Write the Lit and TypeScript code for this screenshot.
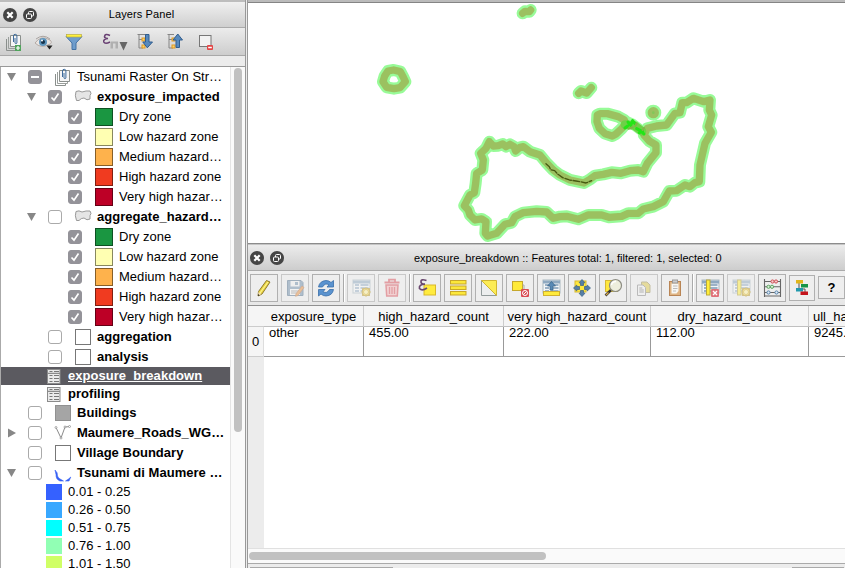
import { LitElement, html, svg, css, nothing, TemplateResult } from "lit";
import { customElement, property } from "lit/decorators.js";
import { classMap } from "lit/directives/class-map.js";
import { styleMap } from "lit/directives/style-map.js";

const doc = svg`<path d="M3.500 8V19.500H13.500V17" fill="none" stroke="#8a8f8c"/><path d="M5.500 6V17.500H15.500V15" fill="none" stroke="#9a9f9c"/><path d="M7.500 4.500H17.500V15.500H7.500Z" fill="#f6f6f6" stroke="#8a8f8c"/><path d="M10.500 11V5a1.700 1.700 0 0 1 3.400 0V12a1 1 0 0 1-1.900 0V7" fill="none" stroke="#3f6c9c"/>`;
const table = svg`<rect x="3" y="3" width="17" height="13" fill="#f4f6f7" stroke="#a9b7c0"/><path d="M3 5h17" stroke="#8fa9c0" stroke-width="3"/><path d="M5 8h4M10.500 8h8M5 11h4M10.500 11h8M5 14h4M10.500 14h8" stroke="#7d9cb8" stroke-width="1.500"/>`;
const spark = svg`<rect x="12.500" y="11.500" width="7" height="7" fill="#eecb38" stroke="#b9972a"/><path d="M16 10v10M11 15h10M12.500 11.500l7 7M19.500 11.500l-7 7" stroke="#c9a830"/><circle cx="16" cy="15" r="2" fill="#fff2a0"/>`;

const icons: Record<string, TemplateResult> = {
  addGroup: svg`${doc}<rect x="12" y="14" width="6" height="6" fill="#4fa45b"/><path d="M15 15v4M13 17h4" stroke="#fff" stroke-width="1.200"/>`,
  eye: svg`<path d="M2 12Q8 3.500 17 9Q20 12 16 13.500Q8 18 2 12Z" fill="#e9e5e2" stroke="#b4aaa5"/><path d="M3 8Q10 2.500 17 8" stroke="#aaa3a0" fill="none"/><circle cx="10" cy="11" r="4" fill="#5e95bd"/><circle cx="10" cy="11" r="2.100" fill="#17334b"/><circle cx="9" cy="9.500" r="1" fill="#fff"/><path d="M13.500 14.500h6l-3 4z" fill="#222"/>`,
  filter: svg`<path d="M3 5.500L9 12V18.500H13V12L19 5.500Z" fill="#6f9dcc" stroke="#4473a5"/><rect x="3.500" y="3.500" width="15" height="2.500" fill="#fff13b" stroke="#b9ad43" stroke-width=".7"/>`,
  epsFilter: svg`<path d="M8 4.500Q3 2 2.500 5.500Q2.500 7.500 6 7.500Q1 8 1.800 11Q3 13.500 8 11" stroke="#694073" stroke-width="1.600" fill="none"/><path d="M8.500 10.500H16V17.500H13.500V12.500H11V17.500H8.500Z" fill="#b0b0b0"/><path d="M17.500 11h8l-4 8.500z" fill="#666"/>`,
  expand: svg`<path d="M1.500 3.500H10M3 3V17H7M3 8.500H7" stroke="#858585" fill="none"/><rect x="6" y="7" width="3" height="3" fill="#f7d26a" stroke="#e09925"/><rect x="6" y="14" width="3" height="3" fill="#f7d26a" stroke="#e09925"/><path d="M9.500 3.500H13V11H16.500L11.300 16.800L6.800 11H9.500Z" fill="#5689bd" stroke="#315d8e"/>`,
  collapse: svg`<path d="M1.500 3.500H8M3 3V17H7M3 8.500H7" stroke="#858585" fill="none"/><rect x="6" y="7" width="3" height="3" fill="#f7d26a" stroke="#e09925"/><rect x="6" y="14" width="3" height="3" fill="#f7d26a" stroke="#e09925"/><path d="M10 16.500H13.500V9H16.500L11.800 3L7 9H10Z" fill="#5689bd" stroke="#315d8e"/>`,
  remove: svg`<rect x="3.500" y="4.500" width="11.500" height="11" fill="#f2f2f2" stroke="#777"/><rect x="11" y="14" width="6" height="5" rx="1" fill="#e24545"/><path d="M12.200 16.500h3.600" stroke="#fff" stroke-width="1.500"/>`,
  pencil: svg`<path d="M13.500 3.500L17 5L9 17L5 19L5.500 14.500Z" fill="#e9d341" stroke="#8e7930"/><path d="M15 5L7 16" stroke="#fff592" stroke-width="1.200"/><path d="M5.500 15l3 2-3.300 1.500z" fill="#f2dfb9"/><path d="M5 17v2l1.500-.7z" fill="#222"/>`,
  save: svg`<path d="M3.500 3.500H17L19 5.500V18.500H3.500Z" fill="#718fac" stroke="#54728e"/><rect x="6.500" y="4" width="9" height="5.500" fill="#eee"/><path d="M11 5h3v3h-3z" fill="#718fac"/><rect x="6" y="12" width="10" height="6" fill="#f6f6f6"/><path d="M7 14h8M7 16h6" stroke="#888"/><path d="M18 9l2 1.500-6 8-2.500.8.500-2.500z" fill="#e89445" stroke="#b66732" stroke-width=".7"/>`,
  refresh: svg`<path d="M3.500 10Q4.500 4 11 3.500Q14 3.500 16 5.500L18.500 3.500V10H12L14 7.800Q10 5.500 7.500 10Z" fill="#5b93cf" stroke="#386eaa" stroke-width=".8"/><path d="M18.500 12.500Q17.500 18.500 11 19Q8 19 6 17L3.500 19V12.500H10L8 14.700Q12 17 14.500 12.500Z" fill="#5b93cf" stroke="#386eaa" stroke-width=".8"/>`,
  addRow: svg`${table}${spark}`,
  trash: svg`<path d="M3.500 5.500H18.500M8 5V2.700h6V5" stroke="#d9515b" stroke-width="1.800" fill="none"/><path d="M5 8H17L16.300 19H5.700Z" fill="#f5b5b8" stroke="#d9515b" stroke-width="1.500"/><path d="M8.500 10v7M11 10v7M13.500 10v7" stroke="#d9515b" stroke-width="1.300"/>`,
  exprSelect: svg`<rect x="8" y="8" width="11.500" height="10" fill="#ffeb3e" stroke="#d9b82a"/><path d="M10.500 3.500Q4.500 1.500 5 5Q5 7.200 9 7.200Q2.500 7.500 3.500 11.500Q6 14.500 11 11" stroke="#6a496f" stroke-width="1.700" fill="none"/>`,
  selectAll: svg`${[3.500, 9, 14.500].map(y => svg`<rect x="3.500" y=${y} width="15.500" height="3.500" fill="#fce83b" stroke="#c9a82b"/>`)}`,
  invert: svg`<path d="M3.500 3.500V18.500H18.500Z" fill="#eceeee" stroke="#929b9b"/><path d="M3.500 3.500H18.500V18.500Z" fill="#fcec55" stroke="#d1b731"/>`,
  deselect: svg`<rect x="3.500" y="4.500" width="10" height="9" fill="#ffea38" stroke="#c5a82c"/><path d="M13.500 8H15V12" stroke="#aaa" fill="none"/><rect x="12" y="12" width="8" height="8" rx="1" fill="#d94c53"/><circle cx="16" cy="16" r="2.500" fill="none" stroke="#fff"/><path d="M14.300 17.700l3.400-3.400" stroke="#fff"/>`,
  moveTop: svg`${table}<rect x="3.500" y="14.500" width="16" height="4" fill="#ffeb3c" stroke="#d1b22f"/><path d="M10 13V9H7.500L11.500 4.500L15.500 9H13V13Z" fill="#5889b5" stroke="#366188" stroke-width=".7"/>`,
  pan: svg`<rect x="4" y="4" width="11" height="11" fill="#ffe93d" stroke="#d6b832"/>${[0, 90, 180, 270].map(a => svg`<path d="M11 2.500L14 5.800H12.500V8.500H9.500V5.800H8Z" transform="rotate(${a} 11 11)" fill="#557fa8" stroke="#3b6186" stroke-width=".7"/>`)}`,
  zoomSel: svg`<rect x="3.500" y="3.500" width="12" height="11" fill="#ffe83e" stroke="#d7b936"/><path d="M9 13L3.500 18.500" stroke="#343434" stroke-width="2.500"/><path d="M6.500 15.500L4 18" stroke="#d9a94a" stroke-width="1.200"/><circle cx="13.500" cy="8.500" r="6" fill="#eeeedd" stroke="#8c8c83" stroke-width="1.200"/><path d="M9.500 8Q10 4.500 14 4.500" stroke="#fff" fill="none" stroke-width="1.500"/>`,
  copy: svg`<path d="M8.500 5H14L17 8V15.500H8.500Z" fill="#ddc94c" stroke="#9b9058"/><path d="M4.500 8H10L12.500 10.500V18.500H4.500Z" fill="#f0f0f0" stroke="#888"/><path d="M6.300 11h3M6.300 13h4.500M6.300 15h4.500" stroke="#777"/>`,
  paste: svg`<rect x="5.500" y="4.500" width="11" height="14" fill="#dfb483" stroke="#b98555"/><path d="M7.500 6.500H14.500V14L12.500 16.500H7.500Z" fill="#f7f7f4"/><rect x="8.500" y="3" width="5" height="3" fill="#ccc" stroke="#999"/><path d="M9 9h4.500M9 11.500h4.500M9 14h3" stroke="#bbb"/>`,
  delCol: svg`${table}<rect x="7.500" y="3" width="3.500" height="15" fill="#ffed3b" stroke="#b9a83a"/><rect x="12" y="12" width="8" height="8" rx="1" fill="#e0737a"/><path d="M14 14l4 4M18 14l-4 4" stroke="#fff" stroke-width="1.300"/>`,
  newCol: svg`${table}<rect x="7.500" y="3" width="3.500" height="15" fill="#ffed3b" stroke="#b9a83a"/>${spark}`,
  abacus: svg`<path d="M3.500 2V20M19.500 2V20M3 4.500H20M3 9.800H20M3 15.500H20M3 19H20" stroke="#666" stroke-width="1.100"/>${[11.500, 15].map(x => svg`<circle cx=${x} cy="4.500" r="1.600" stroke="#cf4e55" fill="#f6c7c8"/>`)}${[7.500, 11].map(x => svg`<circle cx=${x} cy="9.800" r="1.600" stroke="#5da361" fill="#d8f0d6"/>`)}${[7.500, 15.500].map(x => svg`<circle cx=${x} cy="15.500" r="1.600" stroke="#5481a9" fill="#dfeaf5"/>`)}`,
  blocks: svg`<path d="M8 6v6h6v6" stroke="#555" fill="none"/><rect x="5" y="3" width="7" height="3.500" fill="#dfb51c"/><rect x="10" y="7" width="7" height="3.500" fill="#159447"/><rect x="5" y="11" width="7" height="3.500" fill="#2099ad"/><rect x="9.500" y="14.500" width="7.500" height="3.500" fill="#c4141c"/>`,
  group: doc,
  poly: svg`<path d="M4 5.500Q7 4 10 6Q14 4.500 18 5Q20 7.500 18 9.500V13Q15 15 12 12Q9 12 7 14.500H4.500Q2.500 9.500 4 5.500Z" fill="#e5e5e5" stroke="#999"/>`,
  box: svg`<rect x="3.500" y="3.500" width="15" height="15" fill="#fff" stroke="#777"/>`,
  greyBox: svg`<rect x="3.500" y="3.500" width="15" height="15" fill="#a5a5a5" stroke="#919191"/>`,
  tableIcon: svg`<rect x="4.500" y="4.500" width="12.500" height="14" fill="#eaeaea" stroke="#8b8b8b"/><path d="M4.500 4.500h12.500M4.500 8.300h12.500" stroke="#8b8b8b" stroke-width="1.200"/><path d="M6.500 6.500h3M11 6.500h5M6.500 10.500h3M11 10.500h5M6.500 13.500h3M11 13.500h5M6.500 16.500h3M11 16.500h5" stroke="#777"/>`,
  line: svg`<path d="M4 5.500L9 16L13 5L18 4.500" fill="none" stroke="#8a8a8a"/><g fill="#fff" stroke="#888" stroke-width=".7"><circle cx="4" cy="5.500" r="1"/><circle cx="9" cy="16" r="1"/><circle cx="13" cy="5" r="1"/><circle cx="17.500" cy="4.500" r="1"/></g>`,
  raster: svg`<path d="M3 8Q5.500 10 5.500 14Q6.500 17 9 17.500L11.500 19H8Q3.800 17.500 4 12.500Z" fill="#3560f5" stroke="#3560f5" stroke-width=".6"/><path d="M13.500 19H17L18.800 15L16.500 17Z" fill="#3560f5" stroke="#3560f5" stroke-width=".6"/>`,
};

const icon = (name: string, w = 22) => html`<svg width=${w} height="22" viewBox="0 0 ${w} 22">${icons[name]}</svg>`;

const windowButtons = html`<svg width="36" height="16" viewBox="0 0 36 16">
  <circle cx="8" cy="8" r="7" fill="#454545"/><path d="M5.300 5.300l5.400 5.400M10.700 5.300l-5.400 5.400" stroke="#fff" stroke-width="2.200"/>
  <circle cx="28" cy="8" r="7" fill="#454545"/><rect x="26.500" y="4.500" width="5" height="4.500" rx="1" fill="none" stroke="#fff"/><rect x="24.500" y="7" width="5" height="4.500" rx="1" fill="#454545" stroke="#fff"/></svg>`;

interface Row {
  label: string; depth: number; arrow?: "down" | "right"; check?: "on" | "off" | "mixed";
  icon?: string; color?: string; bold?: boolean; short?: boolean; selected?: boolean;
}

const hazards: Row[] = [
  ["Dry zone", "#1a9641"], ["Low hazard zone", "#ffffb2"], ["Medium hazard…", "#feb24c"],
  ["High hazard zone", "#f03b20"], ["Very high hazar…", "#bd0026"],
].map(([label, color]) => ({ label, color, depth: 3, check: "on" as const }));

const rows: Row[] = [
  { label: "Tsunami Raster On Str…", depth: 1, arrow: "down", check: "mixed", icon: "group" },
  { label: "exposure_impacted", depth: 2, arrow: "down", check: "on", icon: "poly", bold: true },
  ...hazards,
  { label: "aggregate_hazard…", depth: 2, arrow: "down", check: "off", icon: "poly", bold: true },
  ...hazards,
  { label: "aggregation", depth: 2, check: "off", icon: "box", bold: true },
  { label: "analysis", depth: 2, check: "off", icon: "box", bold: true },
  { label: "exposure_breakdown", depth: 2, icon: "tableIcon", bold: true, short: true, selected: true },
  { label: "profiling", depth: 2, icon: "tableIcon", bold: true, short: true },
  { label: "Buildings", depth: 1, check: "off", icon: "greyBox", bold: true },
  { label: "Maumere_Roads_WG…", depth: 1, arrow: "right", check: "off", icon: "line", bold: true },
  { label: "Village Boundary", depth: 1, check: "off", icon: "box", bold: true },
  { label: "Tsunami di Maumere …", depth: 1, arrow: "down", check: "off", icon: "raster", bold: true },
  ...[["0.01 - 0.25", "#3561ff"], ["0.26 - 0.50", "#38a8ff"], ["0.51 - 0.75", "#00ffff"], ["0.76 - 1.00", "#91ffb4"], ["1.01 - 1.50", "#d0ff66"]]
    .map(([label, color]) => ({ label, color, depth: 2, short: true })),
];

@customElement("layer-tools")
export class LayerTools extends LitElement {
  static styles = css`
    :host { display: flex; align-items: center; height: 27px; flex: none; padding-left: 3px; background: linear-gradient(#ececec, #cdcdcd); border-bottom: 1px solid #a8a8a8; }
    div { width: 30px; flex: none; display: flex; }
    .wide { width: 43px; padding-left: 9px; box-sizing: border-box; }
  `;
  render() {
    return html`${["addGroup", "eye", "filter"].map(n => html`<div>${icon(n)}</div>`)}
      <div class="wide">${icon("epsFilter", 28)}</div>
      ${["expand", "collapse", "remove"].map(n => html`<div>${icon(n)}</div>`)}`;
  }
}

@customElement("layers-panel")
export class LayersPanel extends LitElement {
  static styles = css`
    :host { display: flex; flex-direction: column; width: 245px; height: 568px; border-right: 3px double #999; background: #ececec; overflow: hidden; }
    .lip { height: 2px; flex: none; background: #bdbdbd; }
    .title { height: 25px; flex: none; display: flex; align-items: center; padding-left: 2px; background: linear-gradient(#f0f0f0, #cfcfcf); border-bottom: 1px solid #aaa; font-size: 11px; }
    .title span { flex: 1; text-align: center; letter-spacing: .1px; padding-bottom: 1px; }
    .gap { height: 10px; flex: none; border-bottom: 1px solid #999; }
    .body { display: flex; flex: 1; min-height: 0; border-left: 1px solid #aaa; background: #fff; }
    .tree { width: 229px; flex: none; overflow: hidden; }
    .track { flex: 1; border-left: 1px solid #e4e4e4; background: #fafafa; padding: 1px 3px; }
    .thumb { height: 364px; width: 8px; border-radius: 4px; background: #c1c1c1; }
    .row { height: 20px; display: flex; align-items: center; white-space: nowrap; font-size: 13px; }
    .text { padding-bottom: 2px; letter-spacing: .03px; }
    .short { height: 18px; }
    .bold { font-weight: bold; }
    .selected { background: #5b5a60; color: #fff; }
    .selected .text { text-decoration: underline; }
    .arrow { width: 20px; flex: none; display: flex; }
    .arrow svg { margin-left: -1px; }
    .d1 { padding-left: 5px; } .d2 { padding-left: 25px; } .d3 { padding-left: 45px; }
    .check { width: 12px; height: 12px; border: 1px solid #aaa; border-radius: 3px; background: #fff; display: flex; margin: 0 10px 0 2px; flex: none; }
    .on, .mixed { background: #949399; border-color: #949399; }
    .swatch { width: 16px; height: 16px; border: 1px solid #0007; margin: 0 6px 0 3px; flex: none; }
    .short .swatch { border: 0; margin: 0 6px 0 20px; }
    .pic { width: 22px; height: 20px; display: flex; align-items: center; margin-right: 3px; flex: none; overflow: hidden; }
    .short .pic { margin: 0 3px 0 -3px; height: 18px; }
  `;
  private row(r: Row) {
    const plainSwatch = r.short && r.color;
    return html`<div class=${classMap({ row: true, ["d" + r.depth]: true, bold: !!r.bold, short: !!r.short, selected: !!r.selected })}>
      ${plainSwatch ? nothing : html`<div class="arrow">${r.arrow ? html`<svg width="14" height="12" viewBox="0 0 14 12"><path d=${r.arrow === "down" ? "M2 2h9l-4.500 8z" : "M3 1.500v9l8-4.500z"} fill="#878787"/></svg>` : nothing}</div>`}
      ${r.check ? html`<div class="check ${r.check}"><svg width="12" height="12" viewBox="0 0 12 12">${r.check === "on" ? svg`<path d="M2.500 6.500L5 9.200L9.500 2.500" fill="none" stroke="#fff" stroke-width="1.700"/>` : r.check === "mixed" ? svg`<path d="M2 6h8" stroke="#fff" stroke-width="2"/>` : nothing}</svg></div>` : nothing}
      ${r.color ? html`<div class="swatch" style=${styleMap({ background: r.color })}></div>` : html`<div class="pic">${icon(r.icon!)}</div>`}
      <span class="text">${r.label}</span></div>`;
  }
  render() {
    return html`<div class="lip"></div><div class="title">${windowButtons}<span>Layers Panel</span></div>
      <layer-tools></layer-tools><div class="gap"></div>
      <div class="body"><div class="tree">${rows.map(r => this.row(r))}</div><div class="track"><div class="thumb"></div></div></div>`;
  }
}

const coast = "M388 425L400 438 415 437 428 432 438 440 450 433 462 440 467 453 480 442 490 440 510 455 540 465 558 487 580 510 600 525 630 540 672 549 690 538 705 527 730 523 755 517 783 520 810 512 835 510 850 515 862 490 888 458 888 435 868 423 852 405 862 385 890 378 920 375 945 340 960 338 967 308 980 308 1000 295 1032 305 1050 300 1048 330 1055 345 1045 380 1054 397 1035 430 1020 495 1018 545 1005 548 990 560 975 555 950 572 928 573 910 605 880 620 850 627 835 640 805 640 785 649 747 652 725 645 685 645 655 658 620 649 600 650 580 655 560 636 530 634 490 638 465 650 455 668 435 673 410 700 383 708 376 700 378 665 365 657 345 660 330 645 325 630 313 617 330 585 343 578 347 550 350 520 367 510 370 480 362 460 378 445Z";
const islets = "M84 213L101 210 121 215 130 232 136 245 120 263 102 266 80 262 69 245 74 228ZM488 40L495 34 508 35 512 30M656 280L663 273 680 279 694 263M712 345L720 341 742 341 775 350 793 360 798 371 785 386 768 402 757 408 735 401 718 385 711 365ZM874 338a6 6 0 1 0 12 0a6 6 0 1 0 -12 0";

@customElement("map-view")
export class MapView extends LitElement {
  static styles = css`:host { display: block; height: 240px; background: #fff; } svg { display: block; }`;
  render() {
    return html`<svg width="597" height="240" viewBox="248 3 597 240"><g transform="translate(360 0) scale(.3333)" fill="none" stroke-linejoin="round" stroke-linecap="round">
      <g stroke="#98fb98" stroke-width="36"><path d=${coast}/><path d=${islets}/></g>
      <path d="M795 362L818 372 842 390" stroke="#98fb98" stroke-width="32"/>
      <g stroke="#9bc160" stroke-width="22"><path d=${coast}/><path d=${islets}/></g>
      <path d="M795 374L822 376 846 394" stroke="#6ed048" stroke-width="26"/>
      <path d="M804 366l8 10 6-14 7 9M795 384l8-6M830 386l12 6 10 10M838 398l10-4" stroke="#22e516" stroke-width="9"/>
      <path d="M806 386l12-4M826 378l4-8M848 390l4-6" stroke="#7fb548" stroke-width="6"/>
      <circle cx="880" cy="338" r="4" fill="#82c858"/>
      <path d="M558 491l10 9 4 9 12 3 10 11 14 10 20 7 20 3 12 2 18 4 17-7" stroke="#465a10" stroke-width="4" stroke-dasharray="20 5"/>
    </g></svg>`;
  }
}

@customElement("attribute-table")
export class AttributeTable extends LitElement {
  static styles = css`
    :host { display: flex; flex-direction: column; height: 323px; overflow: hidden; background: #ececec; }
    .title { height: 25px; flex: none; display: flex; align-items: center; padding-left: 1px; background: linear-gradient(#ececec, #cdcdcd); border-bottom: 1px solid #aaa; font-size: 11px; }
    .title span { padding-left: 129px; white-space: nowrap; }
    .bar { height: 35px; flex: none; display: flex; align-items: center; gap: 3px; padding-left: 2px; border-bottom: 1px solid #909090; box-sizing: border-box; background: linear-gradient(#f0f0f0, #e7e7e7); }
    .btn { width: 28px; height: 28px; box-sizing: border-box; border: 1px solid #b0b0b0; display: flex; align-items: center; justify-content: center; flex: none; background: #eeeeee; }
    .off svg { opacity: .5; }
    .off { border-color: #c8c8c8; }
    .sep { width: 1px; height: 28px; background: #aaa; border-right: 1px solid #fff; margin-right: -1px; flex: none; }
    .small { width: 26px; height: 26px; } .help { width: 27px; height: 23px; margin-bottom: 2px; font-size: 13px; font-weight: bold; }
    .small svg { width: 24px; flex: none; }
    .grid { display: grid; grid-template-columns: 16px 100px 140px 147px 158px 140px; grid-template-rows: 21px 30px 191px; height: 242px; flex: none; font-size: 13px; background: #fff; white-space: nowrap; }
    .grid > div { box-sizing: border-box; min-width: 0; }
    .head { display: flex; align-items: center; justify-content: center; background: #f5f5f5; border-right: 1px solid #ccc; border-bottom: 1px solid #c0c0c0; }
    .corner { background: #f5f5f5; border-bottom: 1px solid #ccc; }
    .cut { justify-content: flex-start; padding-left: 4px; }
    .cell { border-right: 1px solid #999; border-bottom: 1px solid #999; padding: 0 0 0 5px; line-height: 12px; }
    .num { background: #f5f5f5; border-right: 1px solid #ddd; border-bottom: 1px solid #ccc; display: flex; align-items: center; justify-content: center; }
    .side { background: #ececec; }
    .scroll { height: 15px; box-sizing: border-box; flex: none; border-top: 1px solid #e0e0e0; background: #fafafa; padding: 3px 1px; }
    .scroll div { width: 297px; height: 8px; border-radius: 4px; background: #c1c1c1; }
    .foot { flex: none; height: 5px; box-sizing: border-box; border-top: 1px solid #aaa; display: flex; justify-content: space-between; padding: 0 1px 0 2px; align-items: flex-end; }
    .foot i { height: 1px; width: 143px; background: #aaa; } .foot i + i { width: 52px; }
  `;
  @property({ attribute: false }) tools = ["pencil", "-save", "refresh", "|", "-addRow", "-trash", "|", "exprSelect", "selectAll", "invert", "deselect", "moveTop", "pan", "zoomSel", "-copy", "paste", "|", "delCol", "-newCol", "abacus"];
  render() {
    return html`<div class="title">${windowButtons}<span>exposure_breakdown :: Features total: 1, filtered: 1, selected: 0</span></div>
      <div class="bar">${this.tools.map(t => t === "|" ? html`<div class="sep"></div>` : html`<div class=${classMap({ btn: true, off: t[0] === "-" })}>${icon(t.replace("-", ""))}</div>`)}
        <div class="btn small">${icon("blocks")}</div><div class="btn help">?</div></div>
      <div class="grid"><div class="corner"></div><div class="head">exposure_type</div><div class="head">high_hazard_count</div><div class="head">very high_hazard_count</div><div class="head">dry_hazard_count</div><div class="head cut">ull_hazard_count</div>
        <div class="num">0</div><div class="cell">other</div><div class="cell">455.00</div><div class="cell">222.00</div><div class="cell">112.00</div><div class="cell">9245.00</div><div class="side"></div></div>
      <div class="scroll"><div></div></div><div class="foot"><i></i><i></i></div>`;
  }
}

@customElement("app-root")
export class AppRoot extends LitElement {
  static styles = css`
    :host { display: flex; width: 845px; height: 568px; overflow: hidden; background: #ececec; color: #000; font-family: "Liberation Sans", Arial, sans-serif; }
    .left { flex: none; }
    .right { flex: 1; min-width: 0; overflow: hidden; }
    .edge { height: 3px; background: linear-gradient(#bbb 66%, #858585 67%); }
    .divider { height: 2px; background: linear-gradient(#8c8c8c 50%, #c5c5c5 50%); }
  `;
  render() {
    return html`<layers-panel class="left"></layers-panel><div class="right"><div class="edge"></div><map-view></map-view><div class="divider"></div><attribute-table></attribute-table></div>`;
  }
}
